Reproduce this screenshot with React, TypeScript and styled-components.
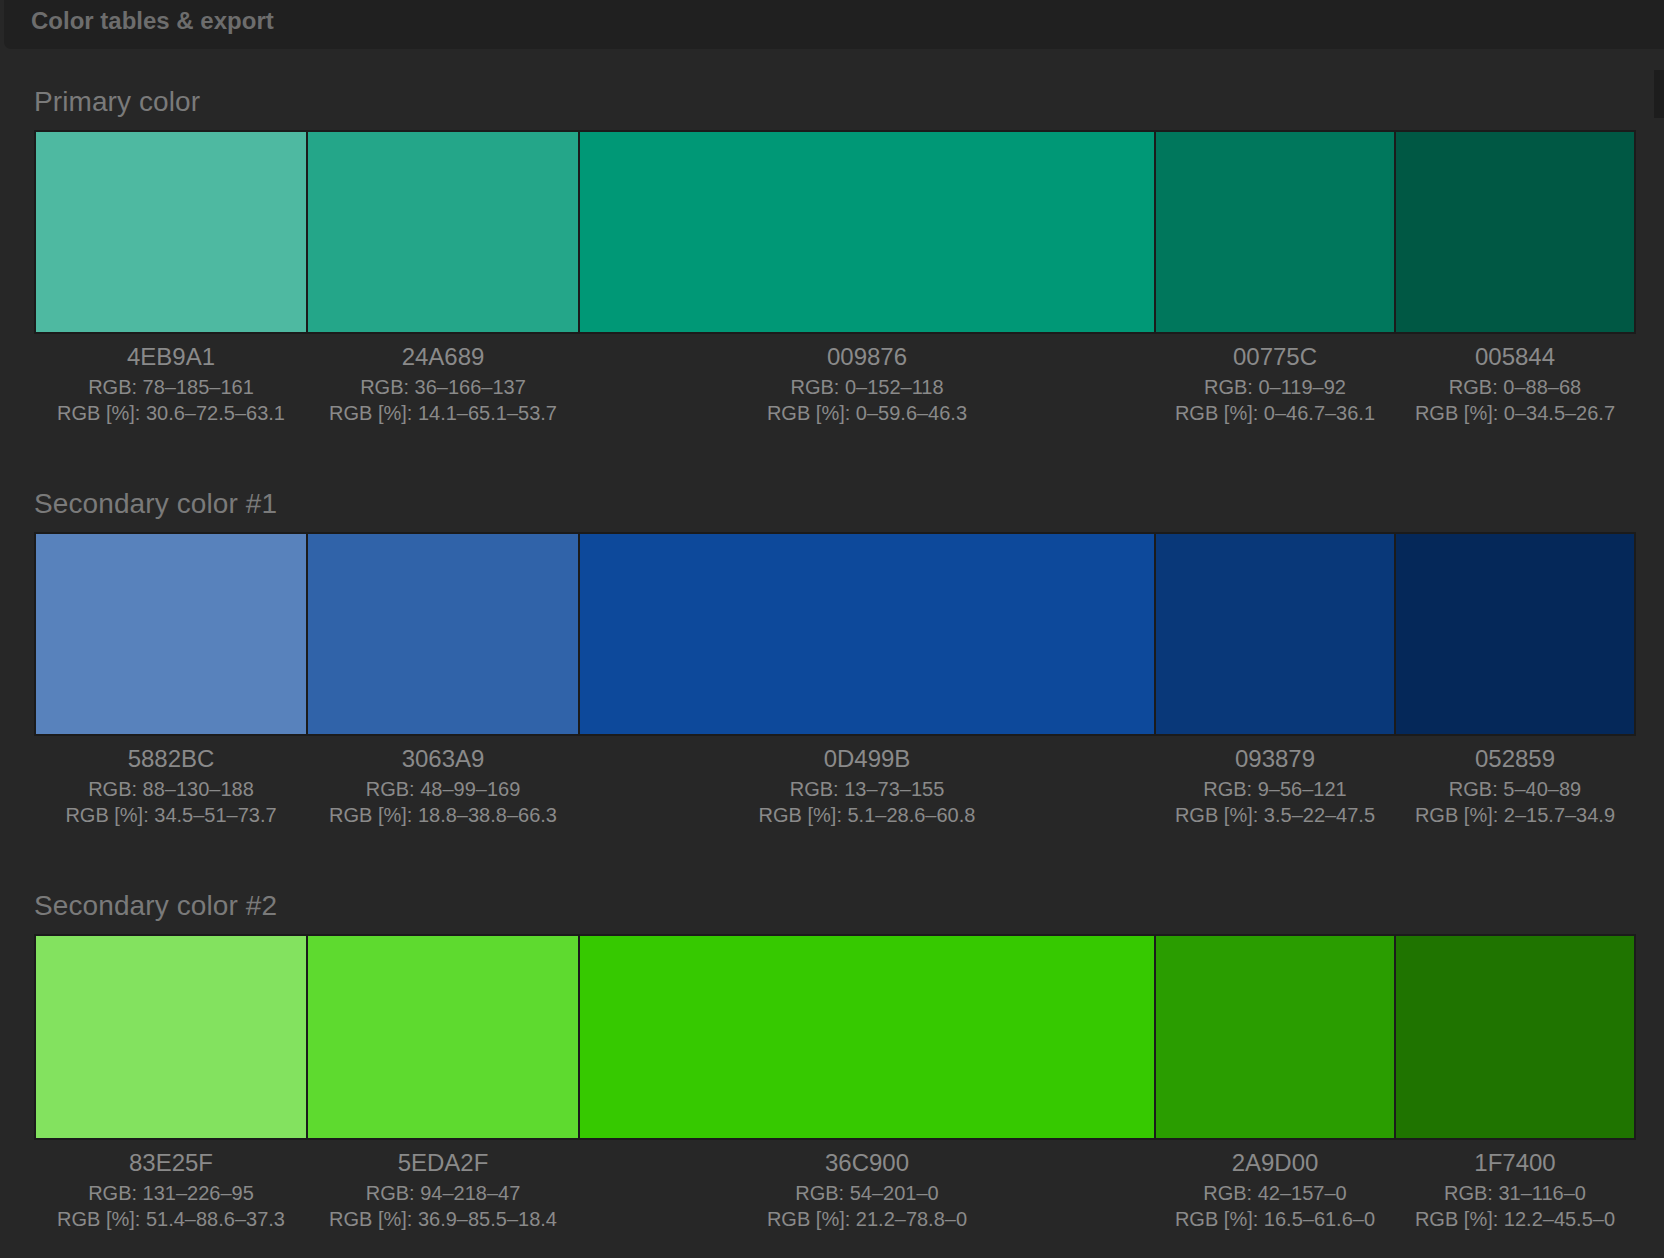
import React from "react";
import styled, { createGlobalStyle } from "styled-components";

const Global = createGlobalStyle`
  html, body {
    margin: 0;
    padding: 0;
    background: #272727;
  }
  body {
    font-family: "Liberation Sans", Arial, Helvetica, sans-serif;
    min-height: 1258px;
  }
`;

const Page = styled.div`
  position: relative;
  min-height: 1258px;
  background: #272727;
`;

const Header = styled.header`
  margin-left: 4px;
  height: 49px;
  box-sizing: border-box;
  padding: 7px 0 0 27px;
  background: #202020;
  border-bottom-left-radius: 7px;
`;

const HeaderTitle = styled.h1`
  margin: 0;
  font-size: 24px;
  line-height: 28px;
  font-weight: 700;
  color: #6d6d6d;
`;

const ScrollThumb = styled.div`
  position: absolute;
  right: 0;
  top: 70px;
  width: 10px;
  height: 48px;
  background: #1d1d1d;
`;

const Content = styled.main`
  padding: 37px 28px 0 34px;
  display: flex;
  flex-direction: column;
  gap: 62px;
`;

const Section = styled.section`
  display: flex;
  flex-direction: column;
`;

const SectionTitle = styled.h2`
  margin: 0 0 12px 0;
  font-size: 28px;
  line-height: 32px;
  font-weight: 400;
  letter-spacing: 0.1px;
  color: #7a7a7a;
`;

const Columns = styled.div`
  display: grid;
  grid-template-columns: 270fr 270fr 574fr 238fr 238fr;
  column-gap: 2px;
`;

const SwatchRow = styled(Columns)`
  padding: 2px;
  background: #1b1b1b;
`;

const Swatch = styled.div<{ $color: string; $height: number }>`
  height: ${(p) => p.$height}px;
  background: ${(p) => p.$color};
`;

const LabelRow = styled(Columns)`
  padding: 9px 2px 0 2px;
`;

const Label = styled.div`
  display: flex;
  flex-direction: column;
  align-items: center;
  color: #8a8a8a;
  white-space: nowrap;
`;

const Hex = styled.div`
  font-size: 24px;
  line-height: 28px;
  margin-bottom: 3px;
`;

const Line = styled.div`
  font-size: 20px;
  line-height: 26px;
`;

const sections: { title: string; height: number; colors: string[] }[] = [
  { title: "Primary color", height: 200, colors: ["4EB9A1", "24A689", "009876", "00775C", "005844"] },
  { title: "Secondary color #1", height: 200, colors: ["5882BC", "3063A9", "0D499B", "093879", "052859"] },
  { title: "Secondary color #2", height: 202, colors: ["83E25F", "5EDA2F", "36C900", "2A9D00", "1F7400"] },
];

const toRgb = (hex: string) => [0, 2, 4].map((i) => parseInt(hex.slice(i, i + 2), 16));
const pct = (v: number) => String(parseFloat(((v / 255) * 100).toFixed(1)));

export default function App() {
  return (
    <Page>
      <Global />
      <Header>
        <HeaderTitle>Color tables &amp; export</HeaderTitle>
      </Header>
      <ScrollThumb />
      <Content>
        {sections.map((s) => (
          <Section key={s.title}>
            <SectionTitle>{s.title}</SectionTitle>
            <SwatchRow>
              {s.colors.map((c) => (
                <Swatch key={c} $color={`#${c}`} $height={s.height} />
              ))}
            </SwatchRow>
            <LabelRow>
              {s.colors.map((c) => {
                const rgb = toRgb(c);
                return (
                  <Label key={c}>
                    <Hex>{c}</Hex>
                    <Line>RGB: {rgb.join("–")}</Line>
                    <Line>RGB [%]: {rgb.map(pct).join("–")}</Line>
                  </Label>
                );
              })}
            </LabelRow>
          </Section>
        ))}
      </Content>
    </Page>
  );
}
